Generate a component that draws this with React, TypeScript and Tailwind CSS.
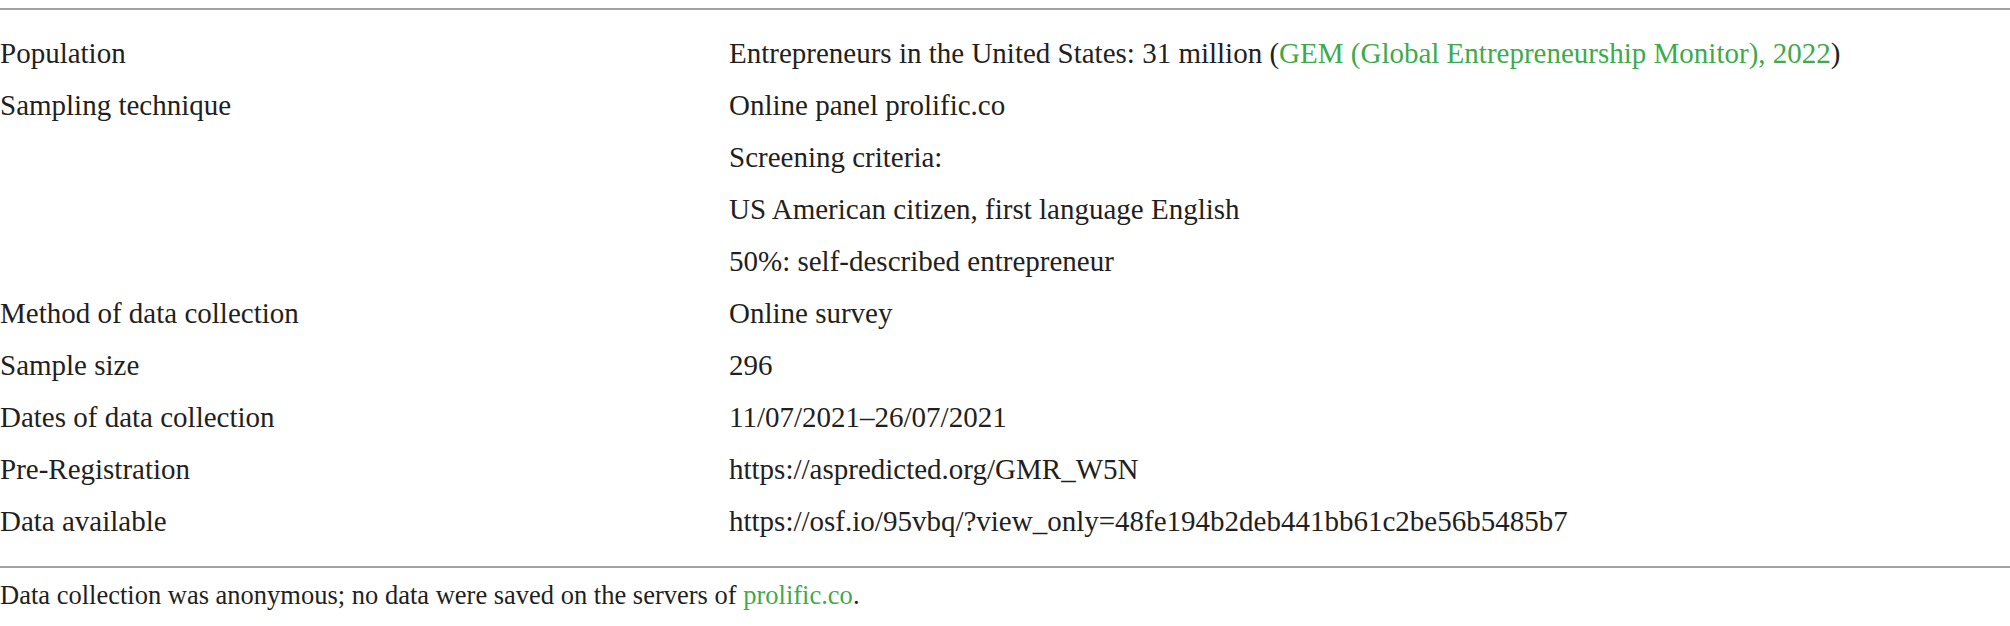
import React from 'react';

interface Row {
    label: string;
    value: React.ReactNode;
}

const green = 'text-[#3dab4a]';

const rows: Row[] = [
    {
        label: 'Population',
        value: (
            <>
                Entrepreneurs in the United States: 31 million (
                <span className={green}>GEM (Global Entrepreneurship Monitor), 2022</span>)
            </>
        ),
    },
    { label: 'Sampling technique', value: 'Online panel prolific.co' },
    { label: '', value: 'Screening criteria:' },
    { label: '', value: 'US American citizen, first language English' },
    { label: '', value: '50%: self-described entrepreneur' },
    { label: 'Method of data collection', value: 'Online survey' },
    { label: 'Sample size', value: '296' },
    { label: 'Dates of data collection', value: '11/07/2021\u201326/07/2021' },
    { label: 'Pre-Registration', value: 'https://aspredicted.org/GMR_W5N' },
    { label: 'Data available', value: 'https://osf.io/95vbq/?view_only=48fe194b2deb441bb61c2be56b5485b7' },
];

export default function App() {
    return (
        <div className="w-[2010px] h-[626px] bg-white pt-2 text-[#231f20] font-['Liberation_Serif',serif]">
            <div className="border-t-2 border-[#a3a3a3] pt-[17px] pb-[19px]">
                {rows.map((row, i) => (
                    <div key={i} className="grid grid-cols-[729px_1fr] text-[29px] leading-[52px] whitespace-nowrap">
                        <div>{row.label}</div>
                        <div>{row.value}</div>
                    </div>
                ))}
            </div>
            <div className="border-t-2 border-[#a3a3a3] pt-[12px] text-[26.5px] leading-[30px] whitespace-nowrap">
                Data collection was anonymous; no data were saved on the servers of{' '}
                <span className={green}>prolific.co</span>.
            </div>
        </div>
    );
}
